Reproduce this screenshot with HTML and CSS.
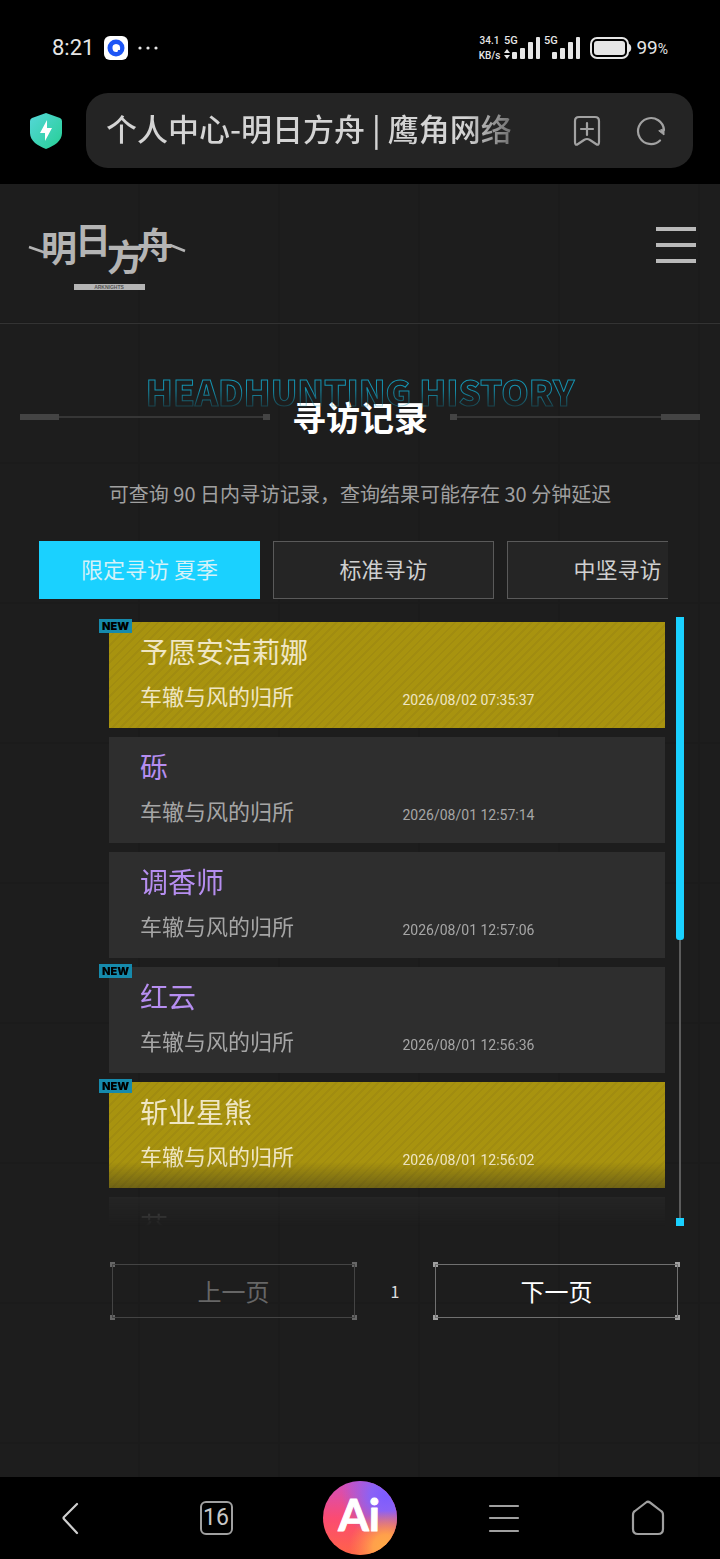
FILE: index.html
```html
<!DOCTYPE html>
<html lang="zh-CN">
<head>
    <meta charset="UTF-8">
    <meta name="viewport" content="width=device-width, initial-scale=1.0">
    <title>个人中心-明日方舟 | 鹰角网络</title>
    <link rel="stylesheet" href="styles.css">
</head>
<body>
    <div class="status-bar">
        <div class="status-left">
            <span class="clock">8:21</span>
            <svg class="app-icon" viewBox="0 0 24 24" aria-hidden="true">
                <rect width="24" height="24" rx="6" fill="#fff"/>
                <circle cx="12" cy="12" r="8.5" fill="#1d55f5"/>
                <path d="M12 8a4 4 0 1 0 1 8q1 0 1-2h2q1-6-4-6z" fill="#fff"/>
            </svg>
            <svg class="dots" viewBox="0 0 20 4" aria-hidden="true">
                <g fill="#e6e6e6"><circle cx="2" cy="2" r="1.600"/><circle cx="10" cy="2" r="1.600"/><circle cx="18" cy="2" r="1.600"/></g>
            </svg>
        </div>
        <div class="status-right">
            <div class="speed"><span>34.1</span><span>KB/s</span></div>
            <svg class="signals" viewBox="0 0 78 28" aria-hidden="true">
                <g fill="#e6e6e6">
                    <text x="0" y="10">5G</text>
                    <text x="40" y="10">5G</text>
                    <path d="M0 19l3-4 3 4zM0 21l3 4 3-4z"/>
                    <rect x="8" y="18" width="5" height="7" rx="1"/>
                    <rect x="16" y="14" width="5" height="11" rx="1"/>
                    <rect x="24" y="8" width="5" height="17" rx="1"/>
                    <rect x="32" y="3" width="4" height="22" rx="1"/>
                    <rect x="48" y="18" width="5" height="7" rx="1"/>
                    <rect x="56" y="14" width="5" height="11" rx="1"/>
                    <rect x="64" y="8" width="5" height="17" rx="1"/>
                    <rect x="72" y="3" width="4" height="22" rx="1"/>
                </g>
            </svg>
            <svg class="battery" viewBox="0 0 42 24" aria-hidden="true">
                <rect x="1" y="2" width="37" height="20" rx="6" fill="none" stroke="#e6e6e6" stroke-width="2"/>
                <rect x="4" y="5" width="31" height="14" rx="3" fill="#e6e6e6"/>
                <path d="M39 8c3 1 3 7 0 8z" fill="#e6e6e6"/>
            </svg>
            <span class="percent">99<small>%</small></span>
        </div>
    </div>

    <div class="address-row">
        <svg class="shield" viewBox="0 0 32 36" aria-hidden="true">
            <defs>
                <linearGradient id="shieldFill" x1="0" y1="0" x2="1" y2="1">
                    <stop offset="0" stop-color="#55d7d9"/>
                    <stop offset="1" stop-color="#26cf94"/>
                </linearGradient>
            </defs>
            <path d="M16 0l14 5q2 1 2 3v12c0 8-8 13-16 16C8 33 0 28 0 20V8q0-2 2-3z" fill="url(#shieldFill)"/>
            <path d="M17 7l-7 13h5v8l7-13h-5z" fill="#fff"/>
        </svg>
        <div class="address-bar">
            <span class="address-text">个人中心-明日方舟 | 鹰角网络</span>
            <button type="button" class="icon-btn" aria-label="添加书签">
                <svg width="28" height="32" viewBox="0 0 28 32" fill="none" stroke="#a2a2a2" stroke-width="2.200" stroke-linejoin="round" stroke-linecap="round">
                    <path d="M6 2h16q4 0 4 4v21q0 4-3 2l-6-4q-3-2-6 0l-6 4q-3 2-3-2V6q0-4 4-4z"/>
                    <path d="M14 8v12M8 14h12"/>
                </svg>
            </button>
            <button type="button" class="icon-btn" aria-label="刷新">
                <svg width="30" height="30" viewBox="0 0 30 30" fill="none" stroke="#a2a2a2" stroke-width="2.200" stroke-linecap="round">
                    <path d="M24 24.500A13 13 0 1 1 28 14"/>
                    <path d="M28 13v6l-5-4z" fill="#a2a2a2" stroke-width="1"/>
                </svg>
            </button>
        </div>
    </div>

    <main class="page">
        <header class="site-header">
            <a href="#" class="logo" aria-label="明日方舟">
                <svg viewBox="0 0 160 76" width="160" height="76">
                    <text class="logo-text" x="13 47 79 109" y="47 39 56 44">明日方舟</text>
                    <path d="M1 32l20 7M142 30l15 6" stroke="#b4b4b4" stroke-width="2.500"/>
                    <rect x="46" y="69" width="71" height="6" fill="#b4b4b4"/>
                    <text class="logo-sub" x="81" y="74" text-anchor="middle">ARKNIGHTS</text>
                </svg>
            </a>
            <button type="button" class="menu-btn" aria-label="菜单"><span></span><span></span><span></span></button>
        </header>

        <section class="heading">
            <div class="heading-en" aria-hidden="true">HEADHUNTING HISTORY</div>
            <div class="heading-row">
                <span class="rule rule-left"></span>
                <h1>寻访记录</h1>
                <span class="rule rule-right"></span>
            </div>
        </section>
        <p class="notice">可查询 90 日内寻访记录，查询结果可能存在 30 分钟延迟</p>

        <nav class="tabs">
            <button type="button" class="tab active">限定寻访 夏季</button>
            <button type="button" class="tab">标准寻访</button>
            <button type="button" class="tab">中坚寻访</button>
        </nav>

        <section class="records">
            <ul class="record-list">
                <li class="record six-star">
                    <span class="badge">NEW</span>
                    <h2>予愿安洁莉娜</h2>
                    <span class="pool">车辙与风的归所</span>
                    <time>2026/08/02 07:35:37</time>
                </li>
                <li class="record">
                    <h2>砾</h2>
                    <span class="pool">车辙与风的归所</span>
                    <time>2026/08/01 12:57:14</time>
                </li>
                <li class="record">
                    <h2>调香师</h2>
                    <span class="pool">车辙与风的归所</span>
                    <time>2026/08/01 12:57:06</time>
                </li>
                <li class="record">
                    <span class="badge">NEW</span>
                    <h2>红云</h2>
                    <span class="pool">车辙与风的归所</span>
                    <time>2026/08/01 12:56:36</time>
                </li>
                <li class="record six-star">
                    <span class="badge">NEW</span>
                    <h2>斩业星熊</h2>
                    <span class="pool">车辙与风的归所</span>
                    <time>2026/08/01 12:56:02</time>
                </li>
                <li class="record three-star">
                    <h2>芬</h2>
                </li>
            </ul>
            <div class="scrollbar"><span class="thumb"></span><span class="track"></span><span class="end"></span></div>
        </section>

        <div class="pagination">
            <button type="button" class="page-btn" disabled>上一页</button>
            <span class="page-number">1</span>
            <button type="button" class="page-btn">下一页</button>
        </div>
    </main>

    <nav class="bottom-nav">
        <button type="button" aria-label="返回">
            <svg width="20" height="34" viewBox="0 0 20 34" fill="none" stroke="#cfcfcf" stroke-width="2.200" stroke-linecap="round" stroke-linejoin="round"><path d="M15 3L2 16q-1 1 0 2l13 14"/></svg>
        </button>
        <button type="button" aria-label="标签页"><span class="tab-count">16</span></button>
        <button type="button" aria-label="Ai">
            <svg width="74" height="74" viewBox="0 0 74 74">
                <defs>
                    <linearGradient id="aiBase" x1="0" y1="0" x2="0" y2="1">
                        <stop offset="0" stop-color="#d04fc0"/>
                        <stop offset=".5" stop-color="#fb4b72"/>
                        <stop offset="1" stop-color="#ff6348"/>
                    </linearGradient>
                    <radialGradient id="aiBlue" cx=".85" cy=".2" r=".6">
                        <stop offset="0" stop-color="#7c5cff"/>
                        <stop offset=".35" stop-color="#8b62f5"/>
                        <stop offset="1" stop-color="#8b62f5" stop-opacity="0"/>
                    </radialGradient>
                    <radialGradient id="aiOrange" cx=".85" cy=".9" r=".5">
                        <stop offset="0" stop-color="#ffab45"/>
                        <stop offset=".35" stop-color="#ffa04b"/>
                        <stop offset="1" stop-color="#ff8a4e" stop-opacity="0"/>
                    </radialGradient>
                </defs>
                <circle cx="37" cy="37" r="37" fill="url(#aiBase)"/>
                <circle cx="37" cy="37" r="37" fill="url(#aiBlue)"/>
                <circle cx="37" cy="37" r="37" fill="url(#aiOrange)"/>
                <text class="ai-text" x="36" y="50" text-anchor="middle">Ai</text>
            </svg>
        </button>
        <button type="button" aria-label="菜单">
            <svg width="32" height="30" viewBox="0 0 32 30" stroke="#a0a0a0" stroke-width="2.200" stroke-linecap="round"><path d="M2 3h28M2 15h28M2 28h28"/></svg>
        </button>
        <button type="button" aria-label="主页">
            <svg width="34" height="36" viewBox="0 0 34 36" fill="none" stroke="#a0a0a0" stroke-width="2.200" stroke-linejoin="round"><path d="M2 15q0-3 2-4L15 2.500q2-1.500 4 0L30 11q2 1 2 4v14q0 5-5 5H7q-5 0-5-5z"/></svg>
        </button>
    </nav>
</body>
</html>
```

FILE: styles.css
```css
* {
    box-sizing: border-box;
    margin: 0;
    padding: 0;
}

body {
    min-height: 100vh;
    display: flex;
    flex-direction: column;
    background-color: #000;
    color: #ccc;
    font-family: "Noto Sans CJK SC", sans-serif;
}

button {
    border: none;
    background: none;
    color: inherit;
    font-family: inherit;
    cursor: pointer;
}

svg {
    display: block;
    flex: none;
}

/* 状态栏 */
.status-bar {
    height: 93px;
    padding: 2px 52px 0;
    display: flex;
    justify-content: space-between;
    align-items: center;
    font-family: Roboto, sans-serif;
    color: #e6e6e6;
}

.status-left,
.status-right {
    display: flex;
    align-items: center;
}

.status-left {
    gap: 10px;
}

.clock {
    font-size: 22px;
}

.app-icon {
    width: 24px;
    height: 24px;
}

.dots {
    width: 20px;
    height: 4px;
}

.speed {
    display: flex;
    flex-direction: column;
    align-items: center;
    font-size: 10px;
    line-height: 15px;
    font-weight: 500;
}

.signals {
    width: 78px;
    height: 28px;
    margin: 0 8px 0 4px;
    overflow: visible;
    font-size: 11px;
    font-weight: 500;
}

.battery {
    width: 42px;
    height: 24px;
}

.percent {
    margin-left: 4px;
    font-size: 19px;
}

.percent small {
    font-size: 14px;
}

/* 地址栏 */
.address-row {
    display: flex;
    align-items: center;
    gap: 24px;
    padding: 0 27px 16px 30px;
}

.shield {
    width: 32px;
    height: 36px;
}

.address-bar {
    flex: 1;
    min-width: 0;
    height: 75px;
    padding: 0 26px 0 20px;
    display: flex;
    align-items: center;
    gap: 32px;
    background-color: #242424;
    border-radius: 22px;
}

.address-text {
    flex: 1;
    min-width: 0;
    padding-bottom: 6px;
    overflow: hidden;
    white-space: nowrap;
    font-size: 31px;
    font-weight: 500;
    line-height: 60px;
    background-image: linear-gradient(to right, #d4d4d4 360px, #666 410px);
    background-clip: text;
    -webkit-background-clip: text;
    color: transparent;
}

.icon-btn {
    width: 32px;
    display: flex;
    justify-content: center;
}

/* 页面主体 */
.page {
    flex: 1;
    background-color: #1d1d1d;
    background-image:
        repeating-linear-gradient(to right, transparent 0 138px, #1b1b1b 138px 140px),
        repeating-linear-gradient(to bottom, transparent 0 138px, #1b1b1b 138px 140px);
}

.site-header {
    height: 140px;
    padding: 31px 24px 0 28px;
    display: flex;
    justify-content: space-between;
    align-items: flex-start;
    border-bottom: 1px solid #333;
}

.logo-text {
    font-size: 36px;
    font-weight: 700;
    fill: #b4b4b4;
}

.logo-sub {
    font-family: "Liberation Sans", sans-serif;
    font-size: 5px;
    font-weight: bold;
    fill: #555;
}

.menu-btn {
    width: 40px;
    margin-top: 12px;
    display: flex;
    flex-direction: column;
    gap: 12px;
}

.menu-btn span {
    width: 100%;
    height: 4px;
    background-color: #b9b9b9;
}

.heading {
    display: grid;
    padding: 48px 20px 0;
}

.heading-en,
.heading-row {
    grid-area: 1 / 1;
}

.heading-en {
    height: 44px;
    text-align: center;
    white-space: nowrap;
    font-size: 35px;
    font-weight: 900;
    line-height: 38px;
    color: transparent;
    -webkit-text-stroke: 1px #1593b0;
    -webkit-mask-image: linear-gradient(to bottom, #000 40%, transparent 95%);
    mask-image: linear-gradient(to bottom, #000 40%, transparent 95%);
}

.heading-row {
    padding-top: 23px;
    display: flex;
    align-items: center;
    gap: 22px;
}

.heading h1 {
    font-size: 34px;
    font-weight: 700;
    line-height: 44px;
    color: #fff;
}

.rule {
    flex: 1;
    height: 6px;
    background-repeat: no-repeat;
    background-image:
        linear-gradient(#444, #444),
        linear-gradient(#444, #444),
        linear-gradient(#363636, #363636);
    background-size: 39px 6px, 7px 6px, 100% 2px;
}

.rule-left {
    background-position: left center, right center, center;
}

.rule-right {
    background-position: right center, left center, center;
}

.notice {
    margin-top: 39px;
    padding: 0 20px;
    text-align: center;
    font-size: 20px;
    line-height: 32px;
    color: #a0a0a0;
}

.tabs {
    margin: 31px 52px 0 39px;
    display: flex;
    gap: 13px;
    overflow: hidden;
}

.tab {
    flex: 0 0 221px;
    height: 58px;
    padding-bottom: 4px;
    border: 1px solid #5a5a5a;
    background-color: #252525;
    color: #d0d0d0;
    font-size: 22px;
    white-space: nowrap;
}

.tab.active {
    border-color: #1ad1ff;
    background-color: #1ad1ff;
    color: #d4f2f8;
}

/* 寻访记录列表 */
.records {
    margin-top: 18px;
    padding: 0 35px 0 99px;
    display: flex;
    gap: 10px;
}

.record-list {
    flex: 1;
    height: 609px;
    padding: 5px 0 0 10px;
    display: flex;
    flex-direction: column;
    gap: 9px;
    overflow: hidden;
    list-style: none;
    -webkit-mask-image: linear-gradient(to bottom, #000 545px, transparent 609px);
    mask-image: linear-gradient(to bottom, #000 545px, transparent 609px);
}

.record {
    position: relative;
    flex: 0 0 106px;
    padding: 10px 0 0 31px;
    display: grid;
    grid-template-columns: 1fr 1fr;
    grid-template-rows: 38px 30px;
    row-gap: 10px;
    align-content: start;
    align-items: baseline;
    background-color: #2e2e2e;
    color: #a6a6a6;
}

.record h2 {
    grid-column: 1 / -1;
    font-size: 28px;
    font-weight: 400;
    line-height: 38px;
    color: #b68ef0;
}

.record .pool {
    font-size: 22px;
    line-height: 30px;
}

.record time {
    font-family: Roboto, sans-serif;
    font-size: 14px;
    line-height: 20px;
}

.record.six-star {
    background-color: #a8930f;
    background-image: repeating-linear-gradient(135deg, transparent 0 4px, #a18c10 4px 6px);
    color: #efe6c4;
}

.record.six-star h2 {
    color: #efe6c4;
}

.record.three-star h2 {
    color: #a6a6a6;
}

.badge {
    position: absolute;
    top: -3px;
    left: -10px;
    width: 33px;
    height: 14px;
    background-color: #168aac;
    color: #000;
    text-align: center;
    font-family: Inter, "Liberation Sans", sans-serif;
    font-size: 11px;
    font-weight: 900;
    line-height: 14px;
}

.scrollbar {
    width: 10px;
    display: flex;
    flex-direction: column;
    align-items: center;
}

.scrollbar .thumb {
    width: 8px;
    height: 53%;
    background-color: #1ad1ff;
    border-radius: 0 0 3px 3px;
}

.scrollbar .track {
    flex: 1;
    width: 2px;
    background-color: #5c5c5c;
}

.scrollbar .end {
    width: 8px;
    height: 8px;
    background-color: #1ad1ff;
}

/* 翻页 */
.pagination {
    margin: 36px 40px 0 110px;
    display: flex;
    align-items: center;
}

.page-btn {
    flex: 1;
    height: 58px;
    color: #fff;
    font-size: 24px;
    line-height: 58px;
    --corner: linear-gradient(#a0a0a0, #a0a0a0);
    background-image: var(--corner), var(--corner), var(--corner), var(--corner);
    background-repeat: no-repeat;
    background-size: 5px 5px;
    background-position: left top, right top, left bottom, right bottom;
    outline: 1px solid #707070;
    outline-offset: -3px;
}

.page-btn:disabled {
    color: #666;
    --corner: linear-gradient(#666, #666);
    outline-color: #444;
    cursor: default;
}

.page-number {
    width: 76px;
    text-align: center;
    font-size: 16px;
    color: #e0e0e0;
}

/* 浏览器底栏 */
.bottom-nav {
    height: 82px;
    display: flex;
    align-items: center;
}

.bottom-nav button {
    flex: 1;
    display: flex;
    justify-content: center;
    align-items: center;
}

.tab-count {
    width: 33px;
    height: 34px;
    border: 2px solid #a0a0a0;
    border-radius: 6px;
    color: #c8c8c8;
    text-align: center;
    font-family: Roboto, sans-serif;
    font-size: 23px;
    line-height: 30px;
}

.ai-text {
    font-family: Lato, sans-serif;
    font-size: 44px;
    font-weight: bold;
    fill: #fff;
    stroke: #fff;
    stroke-width: 1px;
    stroke-linejoin: round;
}
```
